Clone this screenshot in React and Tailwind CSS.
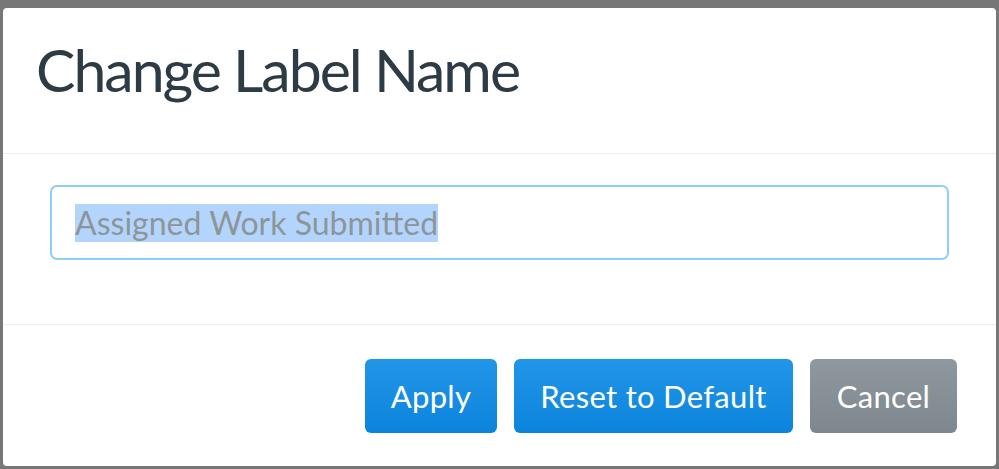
import React from "react";

// Modal: rename a gradebook label
const font = { fontFamily: "Lato, 'Liberation Sans', sans-serif" };

function Button({ children, className }) {
  return (
    <button
      className={`h-[74px] rounded-[6px] text-[31px] tracking-[0.3px] text-white leading-none flex items-center justify-center ${className}`}
    >
      {children}
    </button>
  );
}

export default function App() {
  return (
    <div style={font} className="w-[999px] h-[469px] bg-[#777777] pt-[8px] pl-[3px] pr-[3px] pb-[3px]">
      <div className="w-full h-full bg-white rounded-[4px] flex flex-col">
        {/* header */}
        <div className="h-[146px] pt-[32px] pl-[33px] border-b border-[#ececec]">
          <h1 className="text-[59px] tracking-[-2px] leading-none text-[#2d3b45] font-normal">Change Label Name</h1>
        </div>

        {/* body */}
        <div className="h-[171px] pt-[31px] px-[47px] border-b border-[#ececec]">
          <div className="h-[75px] rounded-[7px] border-2 border-[#8fcdfb] flex items-center pl-[23px]">
            <span className="bg-[#b3d5fd] text-[#8e9599] text-[32px] leading-[38px]">
              Assigned Work Submitted
            </span>
          </div>
        </div>

        {/* footer */}
        <div className="flex-1 flex justify-end items-start pt-[34px] pr-[39px] gap-[17px]">
          <Button className="w-[132px] bg-gradient-to-b from-[#2196e8] to-[#0a84dc]">Apply</Button>
          <Button className="w-[279px] bg-gradient-to-b from-[#2196e8] to-[#0a84dc]">Reset to Default</Button>
          <Button className="w-[147px] bg-gradient-to-b from-[#8f989f] to-[#7e878e]">Cancel</Button>
        </div>
      </div>
    </div>
  );
}
